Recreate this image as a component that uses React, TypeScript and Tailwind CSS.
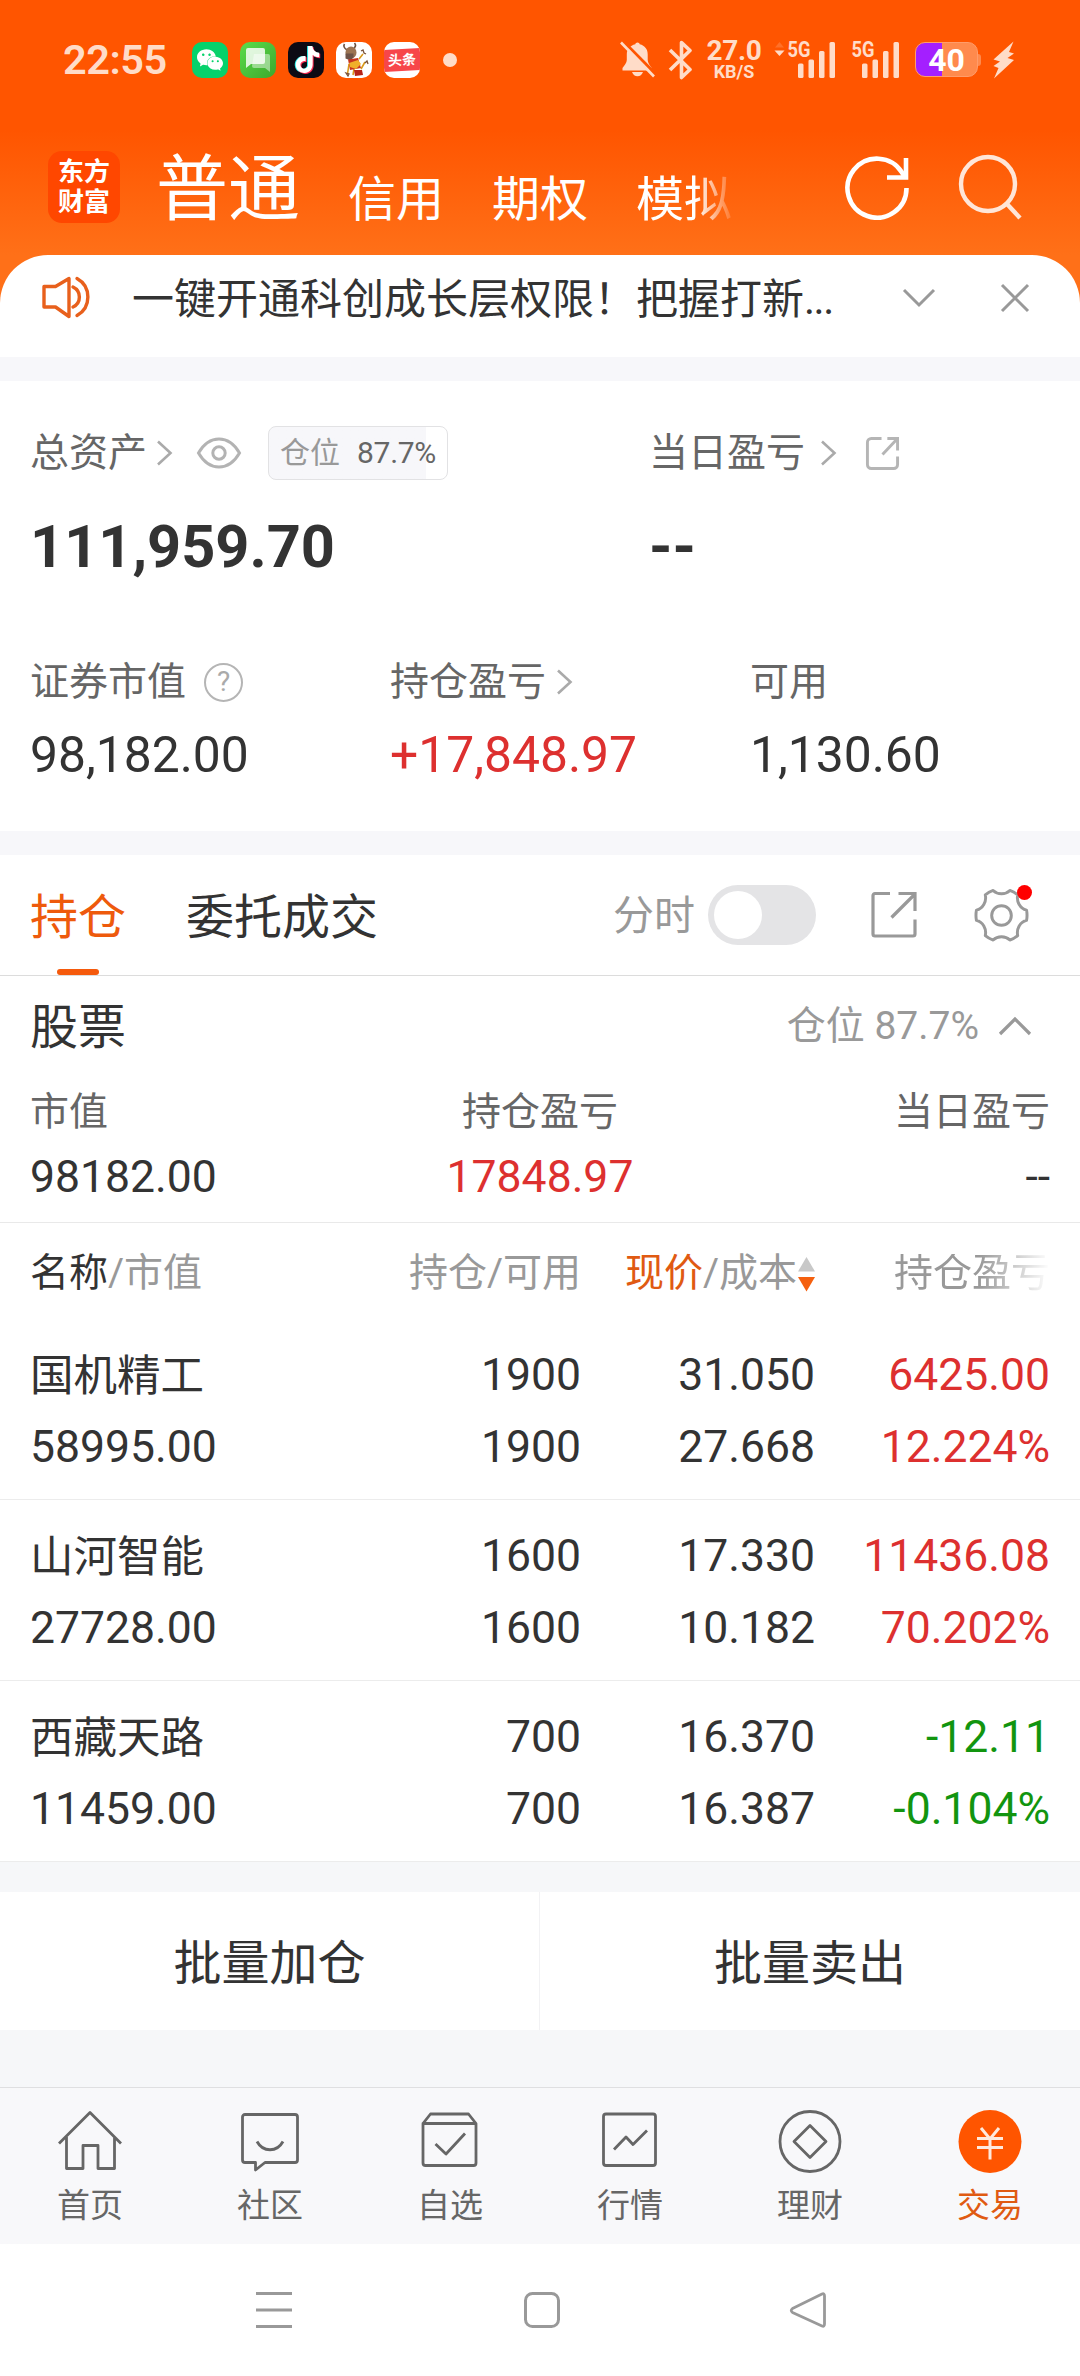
import clsx from 'clsx';
import type { ReactNode } from 'react';
import { SiTiktok, SiWechat } from 'react-icons/si';

const HOLDINGS = [
    { name: '国机精工', value: '58995.00', amount: '1900', usable: '1900', price: '31.050', cost: '27.668', profit: '6425.00', rate: '12.224%', up: true },
    { name: '山河智能', value: '27728.00', amount: '1600', usable: '1600', price: '17.330', cost: '10.182', profit: '11436.08', rate: '70.202%', up: true },
    { name: '西藏天路', value: '11459.00', amount: '700', usable: '700', price: '16.370', cost: '16.387', profit: '-12.11', rate: '-0.104%', up: false },
];

function ChevronRight() {
    return (
        <svg width="17" height="26" viewBox="0 0 17 26" fill="none" stroke="#aaa" strokeWidth="2.6">
            <path d="M2 1.5 14.5 13 2 24.5" />
        </svg>
    );
}

function Signal({ data }: { data?: boolean }) {
    return (
        <svg className="-mt-2" width="64" height="48" viewBox="0 -8 64 48" fill="#ffdcc8">
            {data && <path d="M2 7.5 6.500 2 11 7.500Z" opacity="0.2" />}
            {data && <path d="M1.500 10.500h10L6.500 16Z" />}
            <text x="14.500" y="16.500" fontFamily="Roboto" fontWeight="700" fontSize="22" textLength="23" lengthAdjust="spacingAndGlyphs">5G</text>
            <rect x="25" y="23.500" width="5.500" height="14.500" rx="1.500" />
            <rect x="35.500" y="19.500" width="5.500" height="18.500" rx="1.500" />
            <rect x="46" y="11" width="5.500" height="27" rx="1.500" />
            <rect x="56.500" y="2" width="5.500" height="36" rx="1.500" />
        </svg>
    );
}

function AppIcons() {
    return (
        <div className="ml-[25px] flex items-center gap-3">
            <div className="flex size-9 items-center justify-center rounded-[10px] bg-[#06d26b] text-white">
                <SiWechat className="size-[26px]" />
            </div>
            <div className="size-9 overflow-hidden rounded-[10px] bg-linear-to-br from-[#5bdc4c] to-[#3ca82c]">
                <svg width="36" height="36" viewBox="0 0 36 36">
                    <path d="M14 12h14a2 2 0 0 1 2 2v16l-5-4H14a2 2 0 0 1-2-2z" fill="#fff" opacity=".45" />
                    <path d="M8 6h15a2 2 0 0 1 2 2v12a2 2 0 0 1-2 2H11l-5 4V8a2 2 0 0 1 2-2z" fill="#fff" opacity=".82" />
                </svg>
            </div>
            <div className="relative size-9 rounded-[10px] bg-[#0c0a14]">
                <SiTiktok className="absolute top-[4px] left-[4.500px] size-[27px] text-[#2df0ec]" />
                <SiTiktok className="absolute top-[5.500px] left-[6.500px] size-[27px] text-[#fb2b54]" />
                <SiTiktok className="absolute top-[4.500px] left-[5.500px] size-[27px] text-white" />
            </div>
            <div className="size-9 overflow-hidden rounded-[10px] bg-white">
                <svg width="36" height="36" viewBox="0 0 36 36">
                    <path d="M11 8C8 6 7.500 3.500 8.500 2M18 6c2-1.500 2-3 .5-5" fill="none" stroke="#6b5140" strokeWidth="1.600" />
                    <path d="M13 22 11.500 32M23 17l4-5M18 27l-1 6M25 27l4-7" fill="none" stroke="#d99a1c" strokeWidth="1.600" />
                    <ellipse cx="15" cy="10.500" rx="5.500" ry="6" fill="#9b7453" />
                    <path d="M9.500 11.500h8v4l-3 3-5-2z" fill="#6e5347" />
                    <path d="M12 17.500 22 16l3 10-11 2z" fill="#c9341e" />
                    <path d="m13 21 9-3 3 4-5 5-6-2z" fill="#f0b02a" />
                    <path d="M18 28h8l1 5-8 1z" fill="#b82317" />
                    <path d="m29 21 2-2 1 3M25 9l2-1 1 3 2 1M10 31l3 1-1 2z" fill="none" stroke="#7a5138" strokeWidth="1.300" />
                </svg>
            </div>
            <div className="flex size-9 items-center overflow-hidden rounded-[10px] bg-white">
                <div className="flex h-[22px] w-full -skew-y-3 items-center justify-center bg-[#f7464a] text-[14px] leading-none font-bold text-white">头条</div>
            </div>
            <div className="ml-[11px] size-[14px] rounded-full bg-[#ffdcc8]" />
        </div>
    );
}

function StatusBar() {
    return (
        <div className="flex h-[119px] items-center pr-[65px] pl-[63px] text-[#ffdcc8]">
            <span className="w-[104px] font-['Roboto'] text-[41.500px] leading-none font-semibold tracking-[-0.5px]">22:55</span>
            <AppIcons />
            <div className="ml-auto flex items-center">
                <svg width="36" height="37" viewBox="0 0 36 37" fill="currentColor">
                    <path d="M17.500 1.500c1.200 0 2 .8 2.200 1.800 5.300 1.300 8 5 8 10.200v5.500c0 2.800 2 5 4 8v2.500H2.500V27c2-3 4.300-5 4.300-8v-5.500c0-5.200 3.200-8.900 8.500-10.200.2-1 1-1.800 2.200-1.800zM12 31h11c-1 2.800-3 4.200-5.500 4.200S13 33.800 12 31z" />
                    <path d="M3 0 37 34.500" stroke="#ff5500" strokeWidth="3" />
                    <path d="M1 1.500 34 35.500" stroke="currentColor" strokeWidth="2.600" />
                </svg>
                <svg className="ml-3" width="26" height="40" viewBox="0 0 26 40" fill="none" stroke="currentColor" strokeWidth="3.600" strokeLinejoin="round">
                    <path d="m2 10 20 19.500-8.500 8V2.500l8.500 8L2 30" />
                </svg>
                <div className="ml-[13px] flex w-[54px] flex-col items-center font-['Roboto'] font-bold">
                    <span className="text-[28px] leading-[24px] tracking-[-0.3px]">27.0</span>
                    <span className="text-[18px] leading-[17px]">KB/S</span>
                </div>
                <div className="ml-3"><Signal data /></div>
                <div><Signal /></div>
                <div className="ml-[14px] flex items-center">
                    <div className="flex h-[35px] w-[63px] items-center justify-center rounded-[10px] border border-[#ff9c6b] bg-linear-to-r from-[#a41fff] from-42% to-[#ff8a4d] to-42% font-['Roboto'] text-[32px] leading-none font-bold text-white">40</div>
                    <div className="h-3 w-[3px] rounded-r bg-[#ff8a4d]" />
                </div>
                <svg className="ml-3" width="22" height="38" viewBox="0 0 22 38" fill="currentColor">
                    <path d="M20.500.5.500 18.500 7 20.500.5 25l5 2L1 37.500l20-18.500-6.500-2 6.500-4.500-5-1.500z" />
                </svg>
            </div>
        </div>
    );
}

function TitleBar() {
    return (
        <div className="flex h-[136px] items-center pl-12 text-white">
            <div className="flex size-[72px] flex-col items-center justify-center rounded-[14px] bg-[#ff4700] text-[26px] leading-[30px] font-bold">
                <span>东方</span>
                <span>财富</span>
            </div>
            <div className="ml-9 flex w-[600px] items-center gap-12 text-[48px] whitespace-nowrap">
                <span className="pt-1.5 text-[72px] leading-none">普通</span>
                <span className="pt-[25px] leading-none">信用</span>
                <span className="pt-[25px] leading-none">期权</span>
                <span className="pt-[25px] leading-none [mask-image:linear-gradient(to_right,black_62%,transparent_105%)]">模拟</span>
            </div>
            <svg className="ml-[89px]" width="66" height="66" viewBox="0 0 66 66" fill="none" stroke="currentColor" strokeWidth="4.600">
                <path d="M61.500 34A29.500 29.500 0 1 1 57 18.500l3 5" />
                <path d="M61 4v19.500H42" />
            </svg>
            <svg className="ml-[47px]" width="64" height="66" viewBox="0 0 64 66" fill="none" stroke="#ffe6d8" strokeWidth="4.400">
                <circle cx="30" cy="30" r="27" />
                <path d="m49 50 13 14" />
            </svg>
        </div>
    );
}

function Notice() {
    return (
        <div className="flex h-[102px] rounded-t-[48px] bg-white pb-4">
            <div className="flex flex-1 items-center pr-[50px] pl-[42px]">
                <svg width="50" height="44" viewBox="0 0 50 44" fill="none" stroke="#e8601c" strokeWidth="3.400" strokeLinejoin="round" strokeLinecap="round">
                    <path d="M2 10.500h11.500L27 2.500v38L13.500 31H2z" />
                    <path d="M31 11c8.500 4 8.500 16 0 20" />
                    <path d="M35 2.500c14.500 8 14.500 29 0 37" />
                </svg>
                <span className="ml-10 pt-[3px] text-[42px] leading-none whitespace-nowrap text-[#333]">
                    一键开通科创成长层权限！把握打新<span className="tracking-[-1.500px]">...</span>
                </span>
                <svg className="ml-auto" width="34" height="22" viewBox="0 0 34 22" fill="none" stroke="#999" strokeWidth="3">
                    <path d="m2 3 15 15L32 3" />
                </svg>
                <svg className="ml-[64px]" width="30" height="30" viewBox="0 0 30 30" fill="none" stroke="#999" strokeWidth="3">
                    <path d="m2 2 26 26M28 2 2 28" />
                </svg>
            </div>
        </div>
    );
}

function Stat({ label, value, icon, red }: { label: string; value: string; icon?: ReactNode; red?: boolean }) {
    return (
        <div className="w-[360px] shrink-0">
            <div className="flex h-[50px] items-center text-[39px] leading-none text-[#666]">
                <span className="pt-px">{label}</span>
                {icon}
            </div>
            <div className={clsx('mt-[19px] flex h-[60px] items-center text-[49.800px] leading-none', red ? 'text-[#dd302f]' : 'text-[#333]')}>{value}</div>
        </div>
    );
}

function Assets() {
    return (
        <section className="h-[450px] bg-white pt-[42px] pl-[30px]">
            <div className="flex h-[60px] items-center text-[39px] leading-none text-[#666]">
                <div className="flex w-[619px] items-center">
                    总资产
                    <div className="ml-[9px]"><ChevronRight /></div>
                    <svg className="ml-[23px]" width="46" height="34" viewBox="0 0 46 34" fill="none" stroke="#b3b3b3" strokeWidth="3">
                        <path d="M2.500 17C8 7.500 14.500 3 23 3S38 7.500 43.500 17C38 26.500 31.500 31 23 31S8 26.500 2.500 17Z" />
                        <circle cx="23" cy="17" r="6.200" />
                    </svg>
                    <div className="ml-[26px] flex h-[54px] w-[180px] items-center gap-[17px] rounded-lg border border-[#e2e2e4] bg-linear-to-r from-[#f7f7fa] from-[88%] to-white to-[88%] pl-[11px] text-[30px]">
                        <span className="text-[#999]">仓位</span>
                        <span className="tracking-[-0.3px]">87.7%</span>
                    </div>
                </div>
                当日盈亏
                <div className="ml-[15px]"><ChevronRight /></div>
                <svg className="ml-[28px]" width="35" height="35" viewBox="0 0 36 36" fill="none" stroke="#b5b5b5" strokeWidth="3">
                    <path d="M17 2.500H6.500a4 4 0 0 0-4 4v23a4 4 0 0 0 4 4h23a4 4 0 0 0 4-4V21M23 2.500h10.500V15M33 3 18 19" />
                </svg>
            </div>
            <div className="mt-[25px] flex h-20 items-center text-[59.500px] leading-none font-bold text-[#333]">
                <span className="w-[619px]">111,959.70</span>
                <span>--</span>
            </div>
            <div className="mt-[69px] flex">
                <Stat
                    label="证券市值"
                    value="98,182.00"
                    icon={
                        <span className="ml-[18px] flex size-[39px] items-center justify-center rounded-full border-[2.500px] border-[#b5b5b5] text-[28px] text-[#aaa]">?</span>
                    }
                />
                <Stat label="持仓盈亏" value="+17,848.97" red icon={<div className="ml-[10px]"><ChevronRight /></div>} />
                <Stat label="可用" value="1,130.60" />
            </div>
        </section>
    );
}

function Tabs() {
    return (
        <div className="flex h-[121px] items-center border-b border-[#dcdcdc] bg-white pl-[30px] text-[48px] leading-none text-[#333]">
            <div className="relative flex h-[120px] items-center pt-[5px] text-[#ee5a0c]">
                持仓
                <div className="absolute bottom-0 left-[27px] h-1.5 w-[42px] rounded-full bg-[#f55a0c]" />
            </div>
            <span className="ml-[60px] pt-[5px]">委托成交</span>
            <span className="ml-[235px] pt-[3px] text-[41px] text-[#999]">分时</span>
            <div className="ml-[13px] h-[60px] w-[108px] rounded-full bg-[#e4e4e6] p-1.5">
                <div className="size-12 rounded-full bg-white" />
            </div>
            <svg className="ml-[54px]" width="48" height="48" viewBox="0 0 48 48" fill="none" stroke="#999" strokeWidth="3.200">
                <path d="M20 2.500H5a2 2 0 0 0-2 2V43a2 2 0 0 0 2 2h38a2 2 0 0 0 2-2V28.500M28.500 2.500H45V20M45 3 21.500 26.500" />
            </svg>
            <div className="relative ml-[56px]">
                <svg width="55" height="55" viewBox="0 0 56 56" fill="none" stroke="#999" strokeWidth="3" strokeLinejoin="round">
                    <path d="M19.500 2.500c4.500 4.500 12.500 4.500 17 0q4.500 1.500 8 4.500c-1.500 7 2.500 14 9 15.500q1 5.500 0 10.500c-6.500 1.500-10.500 8.500-9 15.500q-3.500 3-8 4.500c-4.500-4.500-12.500-4.500-17 0q-4.500-1.500-8-4.500c1.500-7-2.500-14-9-15.500q-1-5 0-10.500c6.500-1.500 10.500-8.500 9-15.500q3.500-3 8-4.500z" />
                    <circle cx="28" cy="28" r="10" />
                </svg>
                <div className="absolute -top-[3px] right-[-3px] size-[15px] rounded-full bg-[#ff0000]" />
            </div>
        </div>
    );
}

function StockSummary() {
    return (
        <div className="h-[247px] border-b border-[#e9e9e9] px-[30px] pt-5 leading-none text-[#333]">
            <div className="flex h-[60px] items-center text-[48px]">
                <span className="pt-[3px]">股票</span>
                <span className="ml-auto text-[39px] text-[#999]">仓位 87.7%</span>
                <svg className="mr-[18px] ml-[19px]" width="34" height="22" viewBox="0 0 34 22" fill="none" stroke="#999" strokeWidth="3.200">
                    <path d="m2 19 15-15 15 15" />
                </svg>
            </div>
            <div className="mt-[31px] grid h-[50px] grid-cols-3 items-center pt-px text-[39px] text-[#666]">
                <span>市值</span>
                <span className="text-center">持仓盈亏</span>
                <span className="text-right">当日盈亏</span>
            </div>
            <div className="mt-[15px] grid h-[50px] grid-cols-3 items-center text-[44.500px]">
                <span>98182.00</span>
                <span className="text-center text-[#dd302f]">17848.97</span>
                <span className="text-right">--</span>
            </div>
        </div>
    );
}

const GRID = 'grid grid-cols-[320px_231px_234px_235px] px-[30px] leading-none';

function HoldingTable() {
    return (
        <div>
            <div className={clsx(GRID, 'h-24 items-center pt-[5px] text-[39px] text-[#999]')}>
                <span><span className="text-[#333]">名称</span>/市值</span>
                <span className="text-right">持仓/可用</span>
                <span className="flex items-center justify-end">
                    <span className="text-[#e05a12]">现价</span>/成本
                    <svg className="ml-px" width="17" height="36" viewBox="0 0 17 36">
                        <path d="M8.500 1 17 15.500H0z" fill="#c8c8c8" />
                        <path d="M0 21h17L8.500 35.500z" fill="#f5600f" />
                    </svg>
                </span>
                <span className="text-right [mask-image:linear-gradient(to_right,black_70%,transparent)]">持仓盈亏</span>
            </div>
            {HOLDINGS.map((h) => (
                <div key={h.name} className={clsx(GRID, 'h-[181px] grid-rows-[60px_60px] items-center gap-y-3 border-b border-[#ececec] pt-[26px] text-[44.500px] text-[#333]')}>
                    <span className="pt-[3px] text-[43.500px]">{h.name}</span>
                    <span className="text-right">{h.amount}</span>
                    <span className="text-right">{h.price}</span>
                    <span className={clsx('text-right', h.up ? 'text-[#dd302f]' : 'text-[#12950f]')}>{h.profit}</span>
                    <span>{h.value}</span>
                    <span className="text-right">{h.usable}</span>
                    <span className="text-right">{h.cost}</span>
                    <span className={clsx('text-right', h.up ? 'text-[#dd302f]' : 'text-[#12950f]')}>{h.rate}</span>
                </div>
            ))}
        </div>
    );
}

const NAV: { label: string; icon: ReactNode }[] = [
    { label: '首页', icon: <path d="M2 33.500 33 2.500l31 31M9.500 27v31.500H26v-23h15v23h16.500V27" /> },
    { label: '社区', icon: <path d="M8 4.500h50a2.500 2.500 0 0 1 2.500 2.500v43a2.500 2.500 0 0 1-2.500 2.500H28l-9.500 7.500v-7.500H8A2.500 2.500 0 0 1 5.500 50V7A2.500 2.500 0 0 1 8 4.500ZM20 31.500c6 11 20 11 26 0" /> },
    { label: '自选', icon: <path d="M6 13.500 13.500 4h38l7.500 9.500V53a2.500 2.500 0 0 1-2.500 2.500h-48A2.500 2.500 0 0 1 6 53V13.500H59M18.500 34 29 44l19-20.500" /> },
    { label: '行情', icon: <path d="M9 4h47a2.500 2.500 0 0 1 2.500 2.500V53a2.500 2.500 0 0 1-2.500 2.500H9A2.500 2.500 0 0 1 6.500 53V6.500A2.500 2.500 0 0 1 9 4ZM17 39.500 29 27l7 7.500 14-14" /> },
    { label: '理财', icon: <><circle cx="33" cy="31.500" r="30" /><path d="m33 15.500 16 16-16 16-16-16z" /></> },
];

function BottomNav() {
    return (
        <nav className="grid h-[157px] grid-cols-6 border-t border-[#dfdfe1] bg-[#f8f8fa] pt-[22px] text-[33px] leading-none text-[#666]">
            {NAV.map((item) => (
                <div key={item.label} className="flex flex-col items-center">
                    <svg width="66" height="64" viewBox="0 0 66 64" fill="none" stroke="currentColor" strokeWidth="2.800" strokeLinejoin="round">{item.icon}</svg>
                    <span className="mt-[15px]">{item.label}</span>
                </div>
            ))}
            <div className="flex flex-col items-center text-[#e05a12]">
                <svg width="66" height="64" viewBox="0 0 66 64" fill="none" stroke="#ffe9dc" strokeWidth="3">
                    <circle cx="33" cy="31.500" r="31.500" fill="#ff5500" stroke="none" />
                    <path d="m24 18 9 11 9-11M33 29v20.500M20 28.500h26M20 37.500h26" />
                </svg>
                <span className="mt-[15px]">交易</span>
            </div>
        </nav>
    );
}

function SystemNav() {
    return (
        <div className="flex h-[132px] items-center bg-white pl-[255px]">
            <svg width="38" height="38" viewBox="0 0 38 38" fill="none" stroke="#999" strokeWidth="3">
                <path d="M1 2.500h36M1 19h36M1 35.500h36" />
            </svg>
            <svg className="ml-[230px]" width="38" height="38" viewBox="0 0 38 38" fill="none" stroke="#999" strokeWidth="3">
                <rect x="2.500" y="2.500" width="33" height="33" rx="7" />
            </svg>
            <svg className="ml-[228px]" width="38" height="38" viewBox="0 0 38 38" fill="none" stroke="#999" strokeWidth="2.800" strokeLinejoin="round">
                <path d="M33 3q2.500-1 2.500 2v28q0 3-2.500 2L3.500 21.500q-2.500-2 0-4z" />
            </svg>
        </div>
    );
}

export default function App() {
    return (
        <div className="flex h-[2376px] w-[1080px] flex-col overflow-hidden bg-white font-['Roboto','Noto_Sans_CJK_SC',sans-serif]">
            <header className="bg-[linear-gradient(#ff5500_130px,#ff7018_255px)]">
                <StatusBar />
                <TitleBar />
                <Notice />
            </header>
            <div className="h-6 bg-[#f7f7fa]" />
            <Assets />
            <div className="h-6 bg-[#f7f7fa]" />
            <Tabs />
            <StockSummary />
            <HoldingTable />
            <div className="h-[30px] bg-[#f6f7f9]" />
            <div className="grid h-[138px] grid-cols-2 text-center text-[48px] leading-[143px] text-[#333]">
                <span className="h-[138px] border-r border-[#f2f2f4]">批量加仓</span>
                <span className="h-[138px]">批量卖出</span>
            </div>
            <div className="h-[57px] bg-[#f6f7f9]" />
            <BottomNav />
            <SystemNav />
        </div>
    );
}
